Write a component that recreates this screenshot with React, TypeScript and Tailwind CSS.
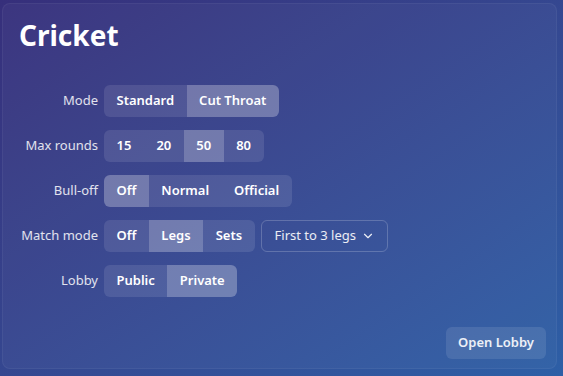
import React, { useState } from 'react';
import { ChevronDown } from 'lucide-react';

interface SegmentProps {
  options: string[];
  value: string;
  onChange: (v: string) => void;
}

function Segmented({ options, value, onChange }: SegmentProps) {
  return (
    <div className="flex h-8 overflow-hidden rounded-md bg-white/10">
      {options.map((opt) => (
        <button
          key={opt}
          type="button"
          onClick={() => onChange(opt)}
          className={`px-[12.5px] text-[13px] font-semibold text-white ${opt === value ? 'bg-white/20' : ''}`}
        >
          {opt}
        </button>
      ))}
    </div>
  );
}

function Row({ label, children }: { label: string; children: React.ReactNode }) {
  return (
    <div className="flex items-center gap-[6px]">
      <div className="w-[79px] text-right text-[13px] text-white/85">{label}</div>
      {children}
    </div>
  );
}

export default function App() {
  const [mode, setMode] = useState('Cut Throat');
  const [rounds, setRounds] = useState('50');
  const [bull, setBull] = useState('Off');
  const [match, setMatch] = useState('Legs');
  const [lobby, setLobby] = useState('Private');

  return (
    <div
      className="h-[376px] w-[563px] overflow-hidden bg-gradient-to-br from-[#362f7b] to-[#2d5fa6] pl-[2px] pt-[3px]"
      style={{ fontFamily: '"Noto Sans", "Open Sans", sans-serif' }}
    >
      <div className="flex h-[366px] w-[555px] flex-col rounded-lg border border-white/5 bg-white/[0.03] pb-[9px] pl-[16px] pr-[10px] pt-[15px]">
        <h1 className="text-[28px] leading-8 font-bold text-white">Cricket</h1>
        <div className="mt-[34px] flex flex-col gap-[13px]">
          <Row label="Mode">
            <Segmented options={['Standard', 'Cut Throat']} value={mode} onChange={setMode} />
          </Row>
          <Row label="Max rounds">
            <Segmented options={['15', '20', '50', '80']} value={rounds} onChange={setRounds} />
          </Row>
          <Row label="Bull-off">
            <Segmented options={['Off', 'Normal', 'Official']} value={bull} onChange={setBull} />
          </Row>
          <Row label="Match mode">
            <Segmented options={['Off', 'Legs', 'Sets']} value={match} onChange={setMatch} />
            <button
              type="button"
              className="flex h-8 w-[127px] items-center justify-between rounded-md border border-white/20 pl-[13px] pr-[12px] text-[13px] text-white/90"
            >
              First to 3 legs
              <ChevronDown className="h-[14px] w-[14px]" strokeWidth={2} />
            </button>
          </Row>
          <Row label="Lobby">
            <Segmented options={['Public', 'Private']} value={lobby} onChange={setLobby} />
          </Row>
        </div>
        <div className="mt-auto flex justify-end">
          <button
            type="button"
            className="h-8 w-[100px] rounded-md bg-white/10 text-[13px] font-semibold text-white/90"
          >
            Open Lobby
          </button>
        </div>
      </div>
    </div>
  );
}
